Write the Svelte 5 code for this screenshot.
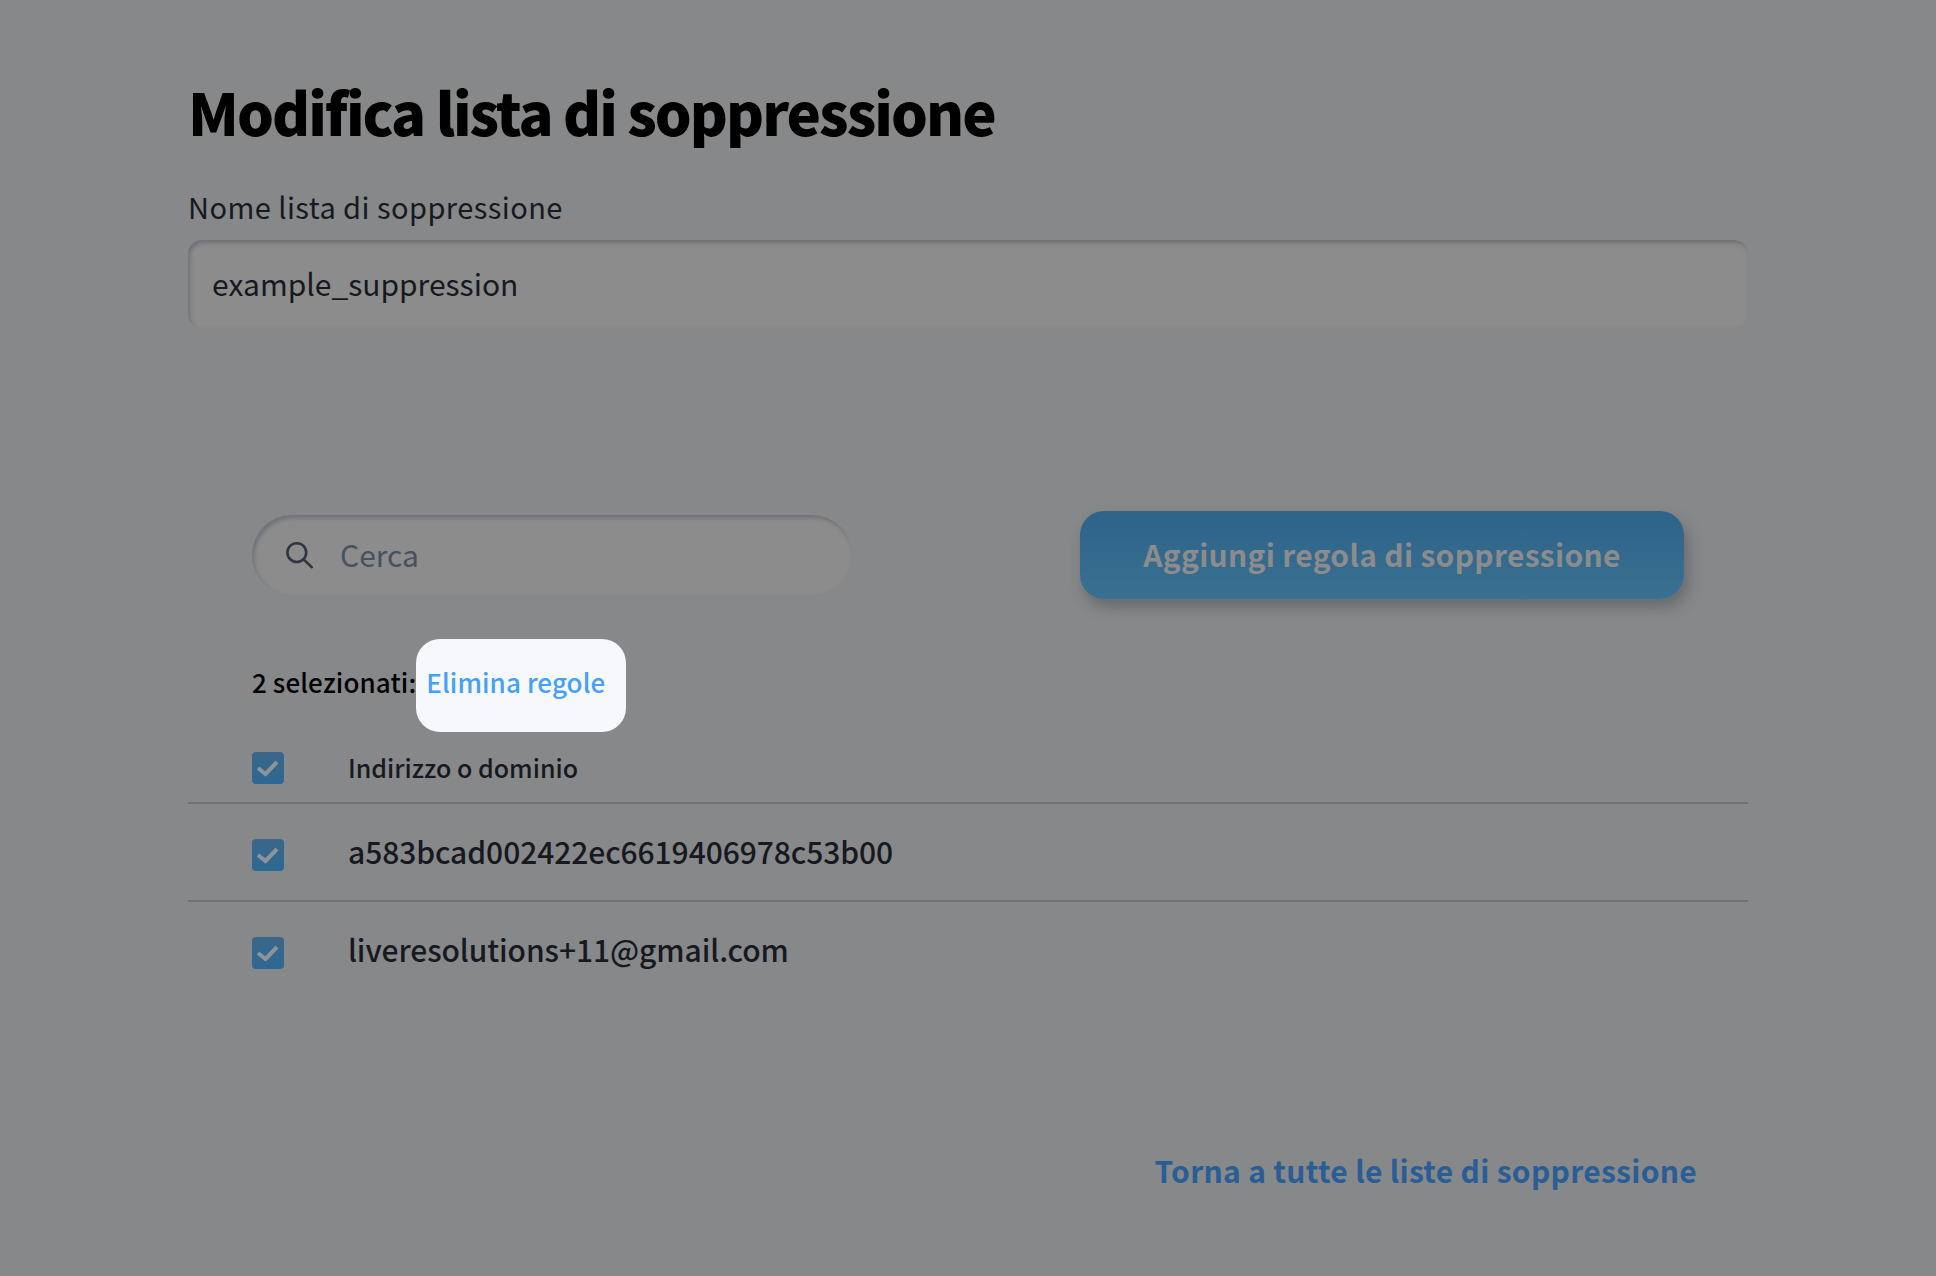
<script>
    const rows = ['a583bcad002422ec6619406978c53b00', 'liveresolutions+11@gmail.com'];
</script>

<main class="page">
    <h1>Modifica lista di soppressione</h1>

    <label class="name-label" for="list-name">Nome lista di soppressione</label>
    <input id="list-name" class="name-input" value="example_suppression" />

    <div class="toolbar">
        <div class="search">
            <svg width="30" height="30" viewBox="0 0 30 30" fill="none" stroke="#30363f" stroke-width="2.6" stroke-linecap="round">
                <circle cx="11.8" cy="12.6" r="9.4" />
                <path d="M18.8 19.6l8 7.6" />
            </svg>
            <span>Cerca</span>
        </div>
        <button class="add">Aggiungi regola di soppressione</button>
    </div>

    <div class="selection">
        <span class="count">2 selezionati:</span>
        <div class="popup"><span>Elimina regole</span></div>
    </div>

    <div class="row head">
        <span class="check">
            <svg width="32" height="32" viewBox="0 0 32 32" fill="none" stroke="#8d9397" stroke-width="4">
                <path d="M6 16l7.5 6L25 10" />
            </svg>
        </span>
        <span>Indirizzo o dominio</span>
    </div>
    {#each rows as row, i}
        <div class="row item" class:last={i === rows.length - 1}>
            <span class="check">
                <svg width="32" height="32" viewBox="0 0 32 32" fill="none" stroke="#8d9397" stroke-width="4">
                    <path d="M6 16l7.5 6L25 10" />
                </svg>
            </span>
            <span class="value">{row}</span>
        </div>
    {/each}

    <div class="footer">
        <span class="back">Torna a tutte le liste di soppressione</span>
    </div>
</main>

<style>
    :global(body) {
        background: #87888a;
    }
    .page {
        box-sizing: border-box;
        height: 1276px;
        padding: 0 188px;
        font-family: "Noto Sans CJK SC", "Noto Sans", sans-serif;
        color: #17191f;
        overflow: hidden;
    }
    h1 {
        margin: 0;
        padding-top: 76px;
        font-size: 58px;
        line-height: 70px;
        font-weight: 900;
        letter-spacing: -1.95px;
        color: #000;
    }
    .name-label {
        display: block;
        margin-top: 40px;
        font-size: 29px;
        line-height: 40px;
        font-weight: 400;
        letter-spacing: 0.45px;
    }
    .name-input {
        display: block;
        box-sizing: border-box;
        width: 100%;
        height: 88px;
        margin-top: 14px;
        padding: 0 24px 2px;
        border: none;
        border-radius: 14px;
        background: #8c8c8c;
        box-shadow: inset 2px 3px 4px #6d7277;
        font-family: inherit;
        font-size: 30px;
        font-weight: 400;
        color: #17191f;
        outline: none;
    }
    .toolbar {
        display: flex;
        justify-content: space-between;
        align-items: center;
        margin-top: 183px;
        padding: 0 64px;
    }
    .search {
        box-sizing: border-box;
        display: flex;
        align-items: center;
        gap: 25px;
        width: 600px;
        height: 80px;
        padding: 0 33px;
        border-radius: 40px;
        background: #8c8c8c;
        box-shadow: inset 2px 3px 4px #6d7277;
        font-size: 30px;
        font-weight: 400;
        color: #46525e;
    }
    .search span {
        margin-bottom: 2px;
    }
    .add {
        width: 604px;
        height: 88px;
        padding: 0 0 2px;
        border: none;
        border-radius: 24px;
        background: linear-gradient(#2e638a, #3a7090);
        box-shadow: 4px 8px 14px rgba(60, 60, 65, 0.4);
        font-family: inherit;
        font-size: 30px;
        font-weight: 700;
        letter-spacing: 0.3px;
        color: #8c8c8c;
    }
    .selection {
        display: flex;
        align-items: center;
        margin-top: 40px;
        padding-left: 64px;
        height: 93px;
        font-size: 26px;
    }
    .count {
        margin-bottom: 8px;
        font-weight: 500;
        letter-spacing: 0.1px;
        color: #000;
    }
    .popup {
        display: flex;
        align-items: center;
        box-sizing: border-box;
        width: 210px;
        height: 93px;
        padding: 0 0 8px 10px;
        border-radius: 24px;
        background: #f6f8fc;
        color: #44a0f8;
        font-weight: 500;
        letter-spacing: 0.1px;
    }
    .row {
        display: flex;
        align-items: center;
        gap: 64px;
        padding-left: 64px;
        border-bottom: 2px solid #6f7175;
    }
    .row.last {
        border-bottom: none;
    }
    .head {
        height: 70px;
        font-size: 25px;
        font-weight: 500;
    }
    .item {
        height: 96px;
        font-size: 30px;
        font-weight: 500;
    }
    .value {
        margin-bottom: 2px;
        letter-spacing: -0.08px;
    }
    .check {
        flex: none;
        width: 32px;
        height: 32px;
        border-radius: 4px;
        background: linear-gradient(#3a6788, #2d6894);
    }
    .item .check {
        margin-top: 5px;
    }
    .head .check {
        margin-top: 2px;
    }
    .check svg {
        display: block;
    }
    .footer {
        display: flex;
        justify-content: flex-end;
        margin-top: 150px;
        padding-right: 51px;
    }
    .back {
        font-size: 30px;
        font-weight: 700;
        letter-spacing: 0.3px;
        color: #295d96;
    }
</style>
